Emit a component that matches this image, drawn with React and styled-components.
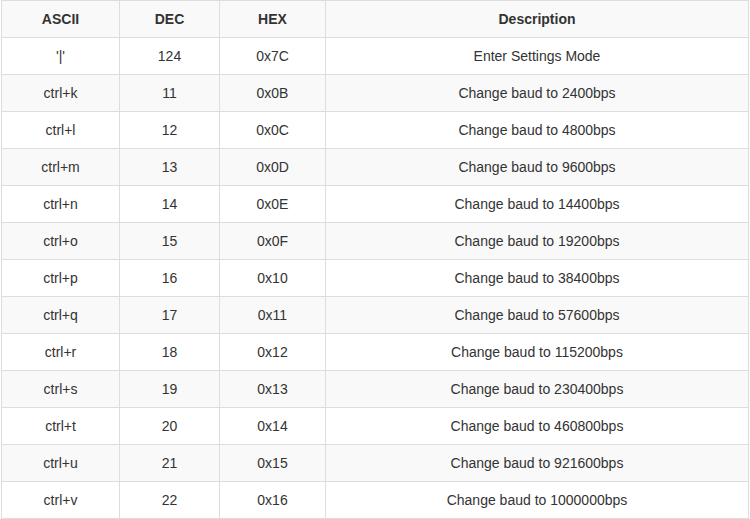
import styled, { createGlobalStyle } from "styled-components";

const GlobalStyle = createGlobalStyle`
  body {
    margin: 0;
    background: #fff;
    font-family: "Liberation Sans", Arial, sans-serif;
    color: #333;
  }
`;

const Wrapper = styled.div`
  padding: 0 1px;
`;

const Table = styled.table`
  width: 748px;
  border-collapse: collapse;
  font-size: 14px;
  line-height: 20px;
  table-layout: fixed;
`;

const Th = styled.th`
  box-sizing: border-box;
  width: ${(p) => p.$w || "auto"};
  padding: 8px;
  border: 1px solid #ddd;
  background: #f9f9f9;
  font-weight: bold;
  text-align: center;
  color: #333;
`;

const Row = styled.tr`
  background: ${(p) => (p.$striped ? "#f9f9f9" : "#fff")};
`;

const Td = styled.td`
  padding: 8px;
  border: 1px solid #ddd;
  text-align: center;
  color: #333;
`;

const rows = [
  ["'|'", "124", "0x7C", "Enter Settings Mode"],
  ["ctrl+k", "11", "0x0B", "Change baud to 2400bps"],
  ["ctrl+l", "12", "0x0C", "Change baud to 4800bps"],
  ["ctrl+m", "13", "0x0D", "Change baud to 9600bps"],
  ["ctrl+n", "14", "0x0E", "Change baud to 14400bps"],
  ["ctrl+o", "15", "0x0F", "Change baud to 19200bps"],
  ["ctrl+p", "16", "0x10", "Change baud to 38400bps"],
  ["ctrl+q", "17", "0x11", "Change baud to 57600bps"],
  ["ctrl+r", "18", "0x12", "Change baud to 115200bps"],
  ["ctrl+s", "19", "0x13", "Change baud to 230400bps"],
  ["ctrl+t", "20", "0x14", "Change baud to 460800bps"],
  ["ctrl+u", "21", "0x15", "Change baud to 921600bps"],
  ["ctrl+v", "22", "0x16", "Change baud to 1000000bps"],
];

const App = () => {
  return (
    <Wrapper>
      <GlobalStyle />
      <Table>
        <thead>
          <tr>
            <Th $w="118px">ASCII</Th>
            <Th $w="100px">DEC</Th>
            <Th $w="106px">HEX</Th>
            <Th>Description</Th>
          </tr>
        </thead>
        <tbody>
          {rows.map((r, i) => (
            <Row key={r[0]} $striped={i % 2 === 1}>
              {r.map((c, j) => (
                <Td key={j}>{c}</Td>
              ))}
            </Row>
          ))}
        </tbody>
      </Table>
    </Wrapper>
  );
};

export default App;
